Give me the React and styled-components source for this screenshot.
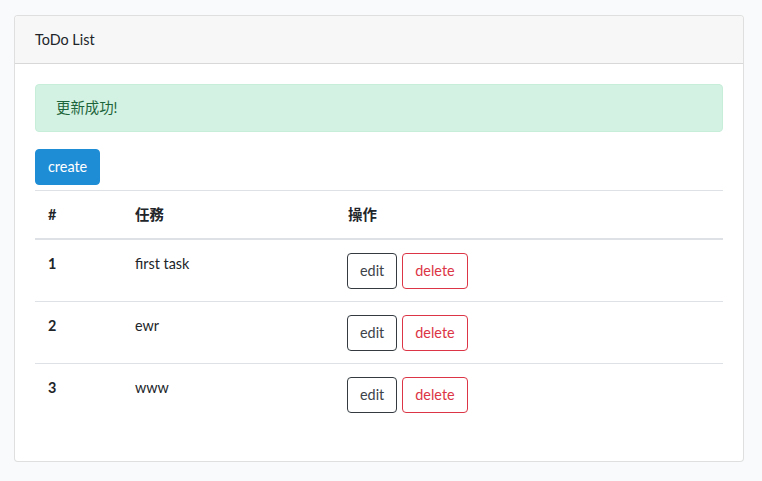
import React from 'react'
import styled, { createGlobalStyle } from 'styled-components'

const GlobalStyle = createGlobalStyle`
  html, body {
    margin: 0;
    padding: 0;
    background: #f8fafc;
  }
  body {
    font-family: Lato, "Noto Sans CJK TC", "Noto Sans", sans-serif;
    font-size: 14.4px;
    line-height: 1.6;
    color: #212529;
  }
`

const Page = styled.div`
  padding: 15px 18px 19px 14px;
`
const Card = styled.div`
  background: #fff;
  border: 1px solid rgba(0, 0, 0, 0.125);
  border-radius: 4px;
`
const CardHeader = styled.div`
  padding: 12px 20px;
  background: #f7f7f7;
  border-bottom: 1px solid rgba(0, 0, 0, 0.125);
  border-radius: 3px 3px 0 0;
  line-height: 23px;
`
const CardBody = styled.div`
  padding: 20px 20px 36px;
`
const Alert = styled.div`
  padding: 11px 20px;
  margin-bottom: 17px;
  background: #d4f2e3;
  border: 1px solid #c6eed9;
  border-radius: 4px;
  color: #1d643b;
  line-height: 24px;
`
const Button = styled.button`
  display: inline-block;
  font-family: inherit;
  font-size: 14.4px;
  line-height: 22px;
  padding: 6px 12px;
  border-radius: 4px;
  cursor: pointer;
  background: ${(p) => p.$bg || 'transparent'};
  color: ${(p) => p.$color};
  border: 1px solid ${(p) => p.$border};
`
const Table = styled.table`
  width: 100%;
  border-collapse: collapse;
  margin-top: 5px;
`
const Th = styled.th`
  text-align: left;
  font-weight: 700;
  padding: 12px 13px;
  border-top: 1px solid #dee2e6;
  border-bottom: 2px solid #dee2e6;
  width: ${(p) => p.$w || 'auto'};
  line-height: 23px;
`
const Td = styled.td`
  padding: 12px 13px;
  border-top: 1px solid #dee2e6;
  vertical-align: top;
  font-weight: ${(p) => (p.$bold ? 700 : 400)};
  line-height: 23px;
`
const Actions = styled.div`
  display: flex;
  gap: 5px;
  margin-left: -1px;
  padding-top: 1px;
`

const tasks = [
  { id: 1, name: 'first task' },
  { id: 2, name: 'ewr' },
  { id: 3, name: 'www' },
]

export default function App() {
  return (
    <>
      <GlobalStyle />
      <Page>
        <Card>
          <CardHeader>ToDo List</CardHeader>
          <CardBody>
            <Alert>更新成功!</Alert>
            <Button $bg='#1f8dd6' $border='#1f8dd6' $color='#fff'>
              create
            </Button>
            <Table>
              <thead>
                <tr>
                  <Th $w='61px'>#</Th>
                  <Th $w='187px'>任務</Th>
                  <Th>操作</Th>
                </tr>
              </thead>
              <tbody>
                {tasks.map((t) => (
                  <tr key={t.id}>
                    <Td $bold>{t.id}</Td>
                    <Td>{t.name}</Td>
                    <Td>
                      <Actions>
                        <Button $border='#343a40' $color='#3d4349'>
                          edit
                        </Button>
                        <Button $border='#dc3545' $color='#dc3545'>
                          delete
                        </Button>
                      </Actions>
                    </Td>
                  </tr>
                ))}
              </tbody>
            </Table>
          </CardBody>
        </Card>
      </Page>
    </>
  )
}
